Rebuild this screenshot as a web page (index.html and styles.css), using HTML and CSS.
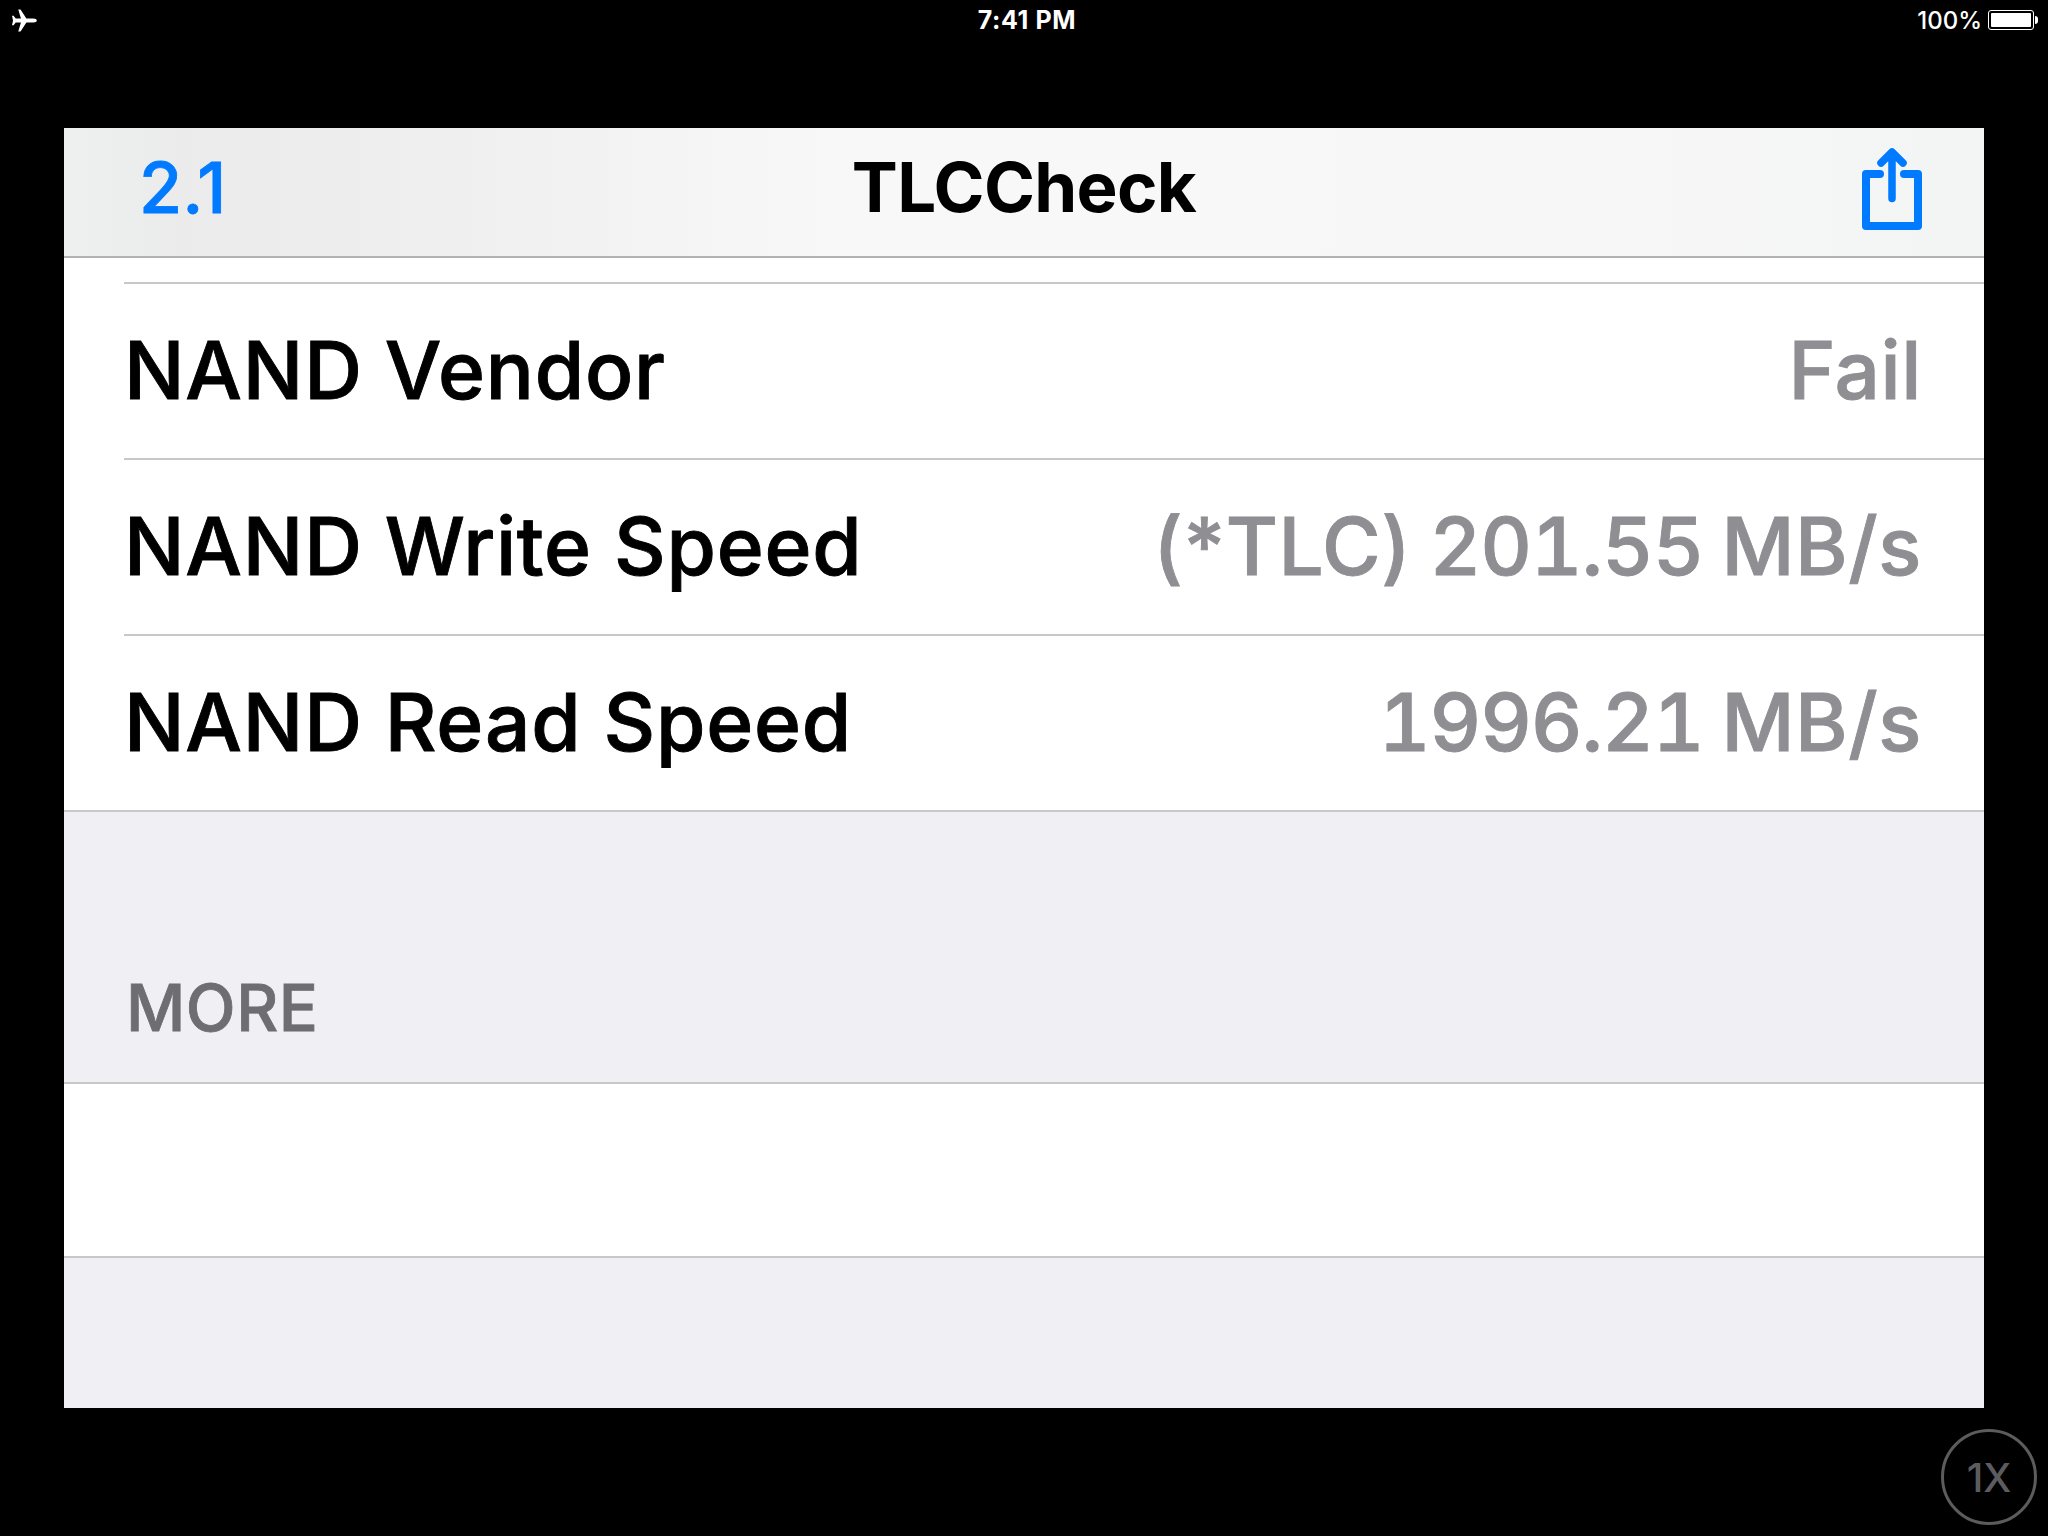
FILE: index.html
```html
<!DOCTYPE html>
<html lang="en">
<head>
<meta charset="utf-8">
<title>TLCCheck</title>
<link rel="stylesheet" href="styles.css">
</head>
<body>
<div class="screen">
  <header class="status">
    <svg class="plane" viewBox="0 0 24 22" width="25" height="23"><path d="M6 0.5h2.2l5.6 8.6h6.6c2.2 0 3.4.9 3.4 1.9s-1.2 1.9-3.4 1.9h-6.6L8.2 21.5H6l2.6-8.6H3.6L1.5 15.6H0l1-4.6-1-4.6h1.5l2.1 2.7h5z" fill="#fff"/></svg>
    <span class="time">7:41 PM</span>
    <div class="battery-group">
      <span class="pct">100%</span>
      <span class="battery"><span class="battery-fill"></span></span>
      <span class="battery-tip"></span>
    </div>
  </header>
  <main class="app">
    <nav class="nav">
      <span class="nav-back">2.1</span>
      <span class="nav-title">TLCCheck</span>
      <svg class="share" viewBox="0 0 60 82" width="60" height="82"><path d="M18 26H4v52h52V26H42" fill="none" stroke="#007aff" stroke-width="8" stroke-linecap="round" stroke-linejoin="round"/><path d="M30 50.5V5M19 15L30 4l11 11" fill="none" stroke="#007aff" stroke-width="7.5" stroke-linecap="round" stroke-linejoin="round"/></svg>
    </nav>
    <div class="spacer-top"></div>
    <section class="group">
      <div class="row"><span class="label">NAND Vendor</span><span class="value">Fail</span></div>
      <div class="row"><span class="label">NAND Write Speed</span><span class="value">(*TLC) <span class="num">201.55</span> MB/s</span></div>
      <div class="row"><span class="label">NAND Read Speed</span><span class="value"><span class="num">1996.21</span> MB/s</span></div>
    </section>
    <div class="section-head">MORE</div>
    <div class="blank-cell"></div>
    <div class="footer"></div>
  </main>
  <div class="zoom-btn">1X</div>
</div>
</body>
</html>
```
FILE: styles.css
```css
* { box-sizing: border-box; }
html, body { margin: 0; padding: 0; background: #000; }
.screen {
  position: relative;
  width: 2048px;
  height: 1536px;
  background: #000;
  font-family: Inter, "Liberation Sans", sans-serif;
  overflow: hidden;
}
.status {
  height: 128px;
  padding: 0 10px 88px 12px;
  display: grid;
  grid-template-columns: 1fr auto 1fr;
  align-items: center;
  color: #fff;
  font-size: 24px;
}
.plane { display: block; }
.time { font-weight: 700; font-size: 25px; letter-spacing: 0.6px; padding-left: 4px; }
.battery-group { display: flex; align-items: center; justify-content: flex-end; }
.pct { font-size: 24px; font-weight: 500; margin-right: 6px; padding-left: 1px; }
.battery {
  width: 46px; height: 20px; padding: 2px;
  border: 1.5px solid #fff; border-radius: 3px; display: flex;
}
.battery-fill { flex: 1; background: #fff; border-radius: 1px; }
.battery-tip { width: 3px; height: 8px; background: #fff; border-radius: 0 3px 3px 0; margin-left: 1px; }
.app {
  width: 1920px; height: 1280px; margin: 0 64px;
  background: #efeff4;
  display: flex; flex-direction: column;
}
.nav {
  height: 130px;
  flex: none;
  display: flex; align-items: center; justify-content: space-between;
  position: relative;
  padding: 0 62px 10px 75px;
  background: linear-gradient(90deg, #eef0f0 0%, #ebebeb 6%, #efefef 20%, #f8f8f8 40%, #f8f8f8 60%, #f7f7f7 80%, #f3f4f4 100%);
  border-bottom: 2px solid #b2b2b2;
}
.nav-back { color: #007aff; font-size: 70px; font-weight: 500; -webkit-text-stroke: 0.8px #007aff; }
.nav-title {
  position: absolute; left: 0; right: 0; top: 0; height: 118px;
  display: flex; align-items: center; justify-content: center;
  color: #000; font-size: 69px; font-weight: 700; letter-spacing: -0.7px;
}
.share { display: block; margin-top: 4px; }
.spacer-top { height: 24px; flex: none; background: #fff; }
.group { background: #fff; border-bottom: 2px solid #c8c7cc; flex: none; }
.row {
  height: 176px;
  margin-left: 60px;
  padding: 0 62px 4px 0;
  border-top: 2px solid #c8c7cc;
  display: flex; align-items: center; justify-content: space-between;
  font-size: 80px;
  font-weight: 500;
  letter-spacing: 0.8px;
}
.label { color: #000; -webkit-text-stroke: 0.9px #000; }
.value { color: #8e8e93; -webkit-text-stroke: 0.9px #8e8e93; letter-spacing: 0.6px; word-spacing: -4px; }
.num { font-variant-numeric: tabular-nums; letter-spacing: -1.1px; }
.section-head {
  height: 272px; flex: none;
  padding: 0 0 35px 62px;
  display: flex; align-items: flex-end;
  color: #6d6d72; font-size: 65px; font-weight: 500; letter-spacing: 0.5px;
  -webkit-text-stroke: 0.8px #6d6d72;
  border-bottom: 2px solid #c8c7cc;
}
.blank-cell { height: 174px; flex: none; background: #fff; border-bottom: 2px solid #c8c7cc; }
.footer { flex: 1; }
.zoom-btn {
  position: absolute; left: 1941px; top: 1429px;
  width: 96px; height: 96px;
  border: 3px solid #5c5c5f; border-radius: 50%;
  display: flex; align-items: center; justify-content: center;
  color: #5c5c5f; font-size: 40px; font-weight: 500;
}
```
